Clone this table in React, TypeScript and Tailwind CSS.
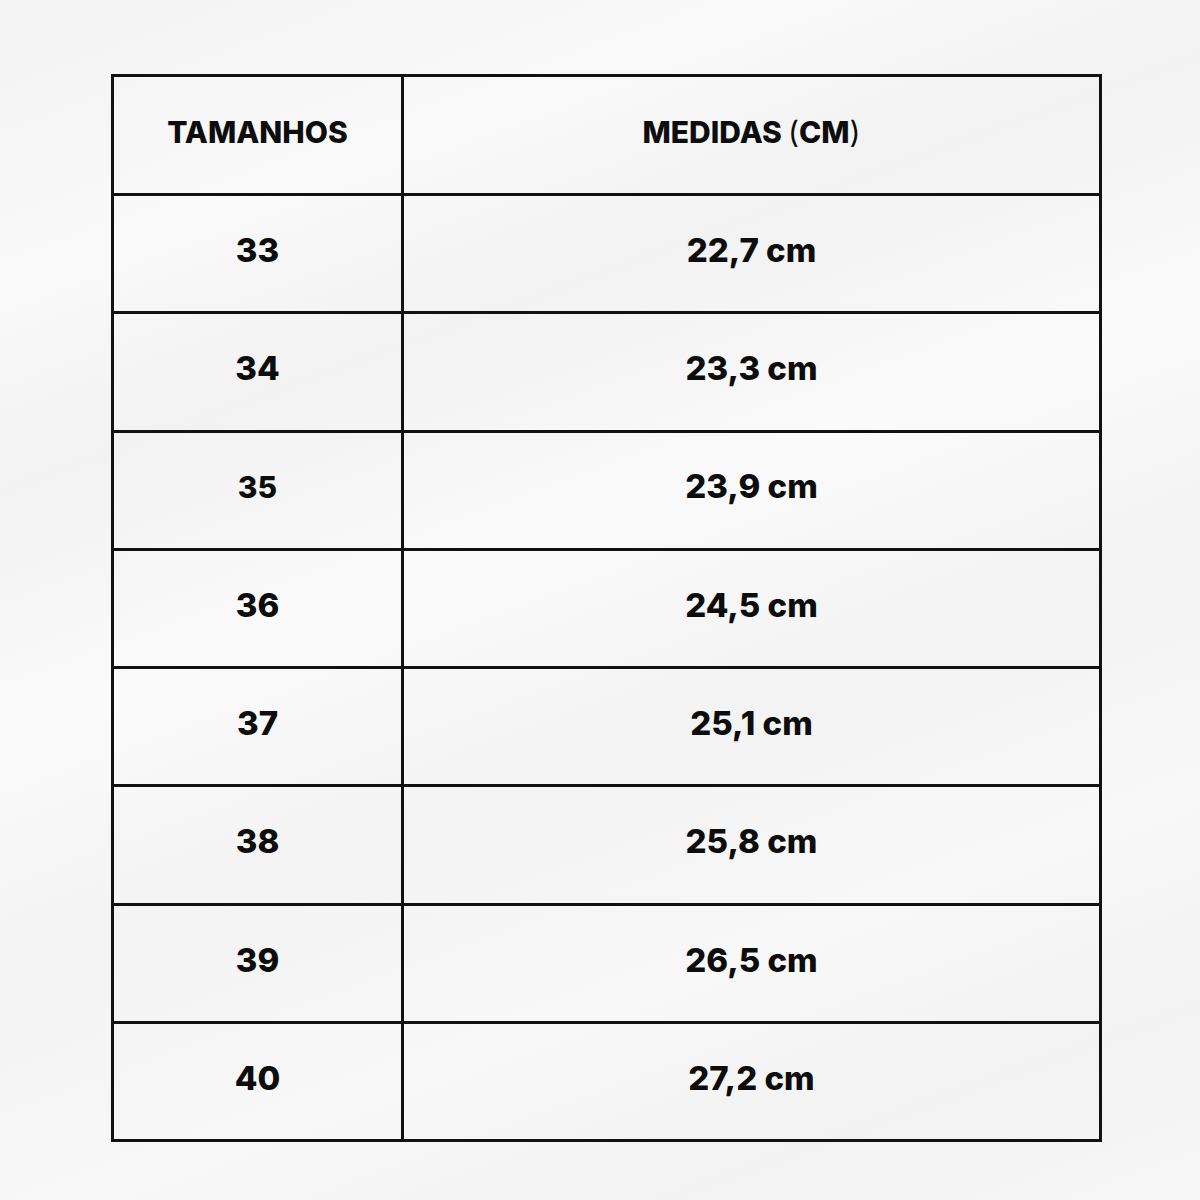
const rows: [string, string][] = [
  ['33', '22,7 cm'],
  ['34', '23,3 cm'],
  ['35', '23,9 cm'],
  ['36', '24,5 cm'],
  ['37', '25,1 cm'],
  ['38', '25,8 cm'],
  ['39', '26,5 cm'],
  ['40', '27,2 cm'],
];

export default function App() {
  return (
    <div className="w-[1200px] h-[1200px] bg-[#f5f5f5] bg-[linear-gradient(160deg,#f3f3f3_0%,#f9f9f9_18%,#f2f2f2_30%,#fafafa_45%,#f3f3f3_60%,#f8f8f8_75%,#f2f2f2_88%,#f7f7f7_100%)] pt-[74px] pl-[111px] font-['Inter','Liberation_Sans',sans-serif] text-[#0d0d0d]">
      <div className="w-[991px] border-[3px] border-[#111]">
        <div className="flex h-[116px]">
          <div className="w-[290px] border-r-[3px] border-[#111] flex items-center justify-center pb-[6px] text-[30px] font-extrabold">
            TAMANHOS
          </div>
          <div className="flex-1 flex items-center justify-center pb-[6px] text-[30px] font-extrabold">
            MEDIDAS<span className="ml-[6px] font-normal">(</span>CM<span className="font-normal">)</span>
          </div>
        </div>
        {rows.map(([size, cm]) => (
          <div key={size} className="flex h-[118.3px] border-t-[3px] border-[#111]">
            <div
              className={
                size === '35'
                  ? 'w-[290px] border-r-[3px] border-[#111] flex items-center justify-center pb-[6px] text-[30px] font-extrabold'
                  : 'w-[290px] border-r-[3px] border-[#111] flex items-center justify-center pb-[6px] text-[33px] font-extrabold'
              }
            >
              {size}
            </div>
            <div className="flex-1 flex items-center justify-center pb-[6px] text-[33px] font-extrabold">
              {cm}
            </div>
          </div>
        ))}
      </div>
    </div>
  );
}
